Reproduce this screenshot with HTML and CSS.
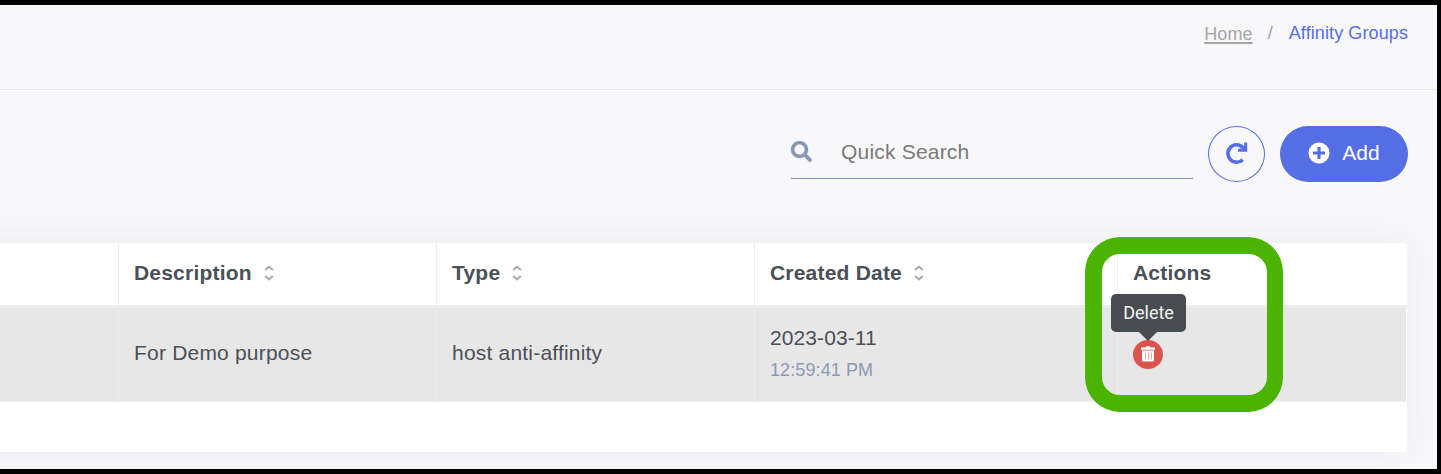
FILE: index.html
```html
<!DOCTYPE html>
<html lang="en">
<head>
<meta charset="utf-8">
<title>Affinity Groups</title>
<link rel="stylesheet" href="styles.css">
</head>
<body>
<svg class="sprite" aria-hidden="true">
  <symbol id="sort" viewBox="0 0 10 16"><path d="M1.200 5 5 1.500 8.800 5M1.200 11 5 14.500 8.800 11" fill="none" stroke="#aaa" stroke-width="2"/></symbol>
</svg>
<main class="page">
  <nav class="breadcrumb">
    <a class="home">Home</a><span class="slash">/</span><span class="current">Affinity Groups</span>
  </nav>
  <section class="toolbar">
    <label class="search">
      <svg class="search-icon" viewBox="0 0 512 512"><path fill="currentColor" stroke="currentColor" stroke-width="8" d="M505 442.700 405.300 343c-4.500-4.500-10.600-7-17-7H372c27.600-35.300 44-79.700 44-128C416 93.100 322.900 0 208 0S0 93.100 0 208s93.100 208 208 208c48.300 0 92.700-16.400 128-44v16.300c0 6.400 2.500 12.500 7 17l99.700 99.700c9.400 9.400 24.600 9.400 33.900 0l28.300-28.300c9.400-9.400 9.400-24.600.1-34zM208 336c-70.700 0-128-57.200-128-128 0-70.700 57.200-128 128-128 70.700 0 128 57.200 128 128 0 70.700-57.200 128-128 128z"/></svg>
      <span class="placeholder">Quick Search</span>
    </label>
    <button class="refresh" aria-label="Refresh">
      <svg viewBox="0 0 22 22" width="22" height="22"><path d="M18.600 8A8.700 8.700 0 1 0 16.700 17.700" fill="none" stroke="currentColor" stroke-width="3.600"/><path d="M18.100 .6h3.100v9.200H12V6.700h3.300l2.800-2.700z" fill="currentColor"/></svg>
    </button>
    <button class="add">
      <svg viewBox="0 0 22 22" width="22" height="22"><circle cx="11" cy="11" r="10.500" fill="#fff"/><path d="M11 5v12M5 11h12" stroke="#556ee6" stroke-width="3.200"/></svg>
      <span>Add</span>
    </button>
  </section>
  <section class="card">
    <div class="row head">
      <div class="cell"></div>
      <div class="cell">Description<svg class="sort"><use href="#sort"/></svg></div>
      <div class="cell">Type<svg class="sort"><use href="#sort"/></svg></div>
      <div class="cell">Created Date<svg class="sort"><use href="#sort"/></svg></div>
      <div class="cell">Actions</div>
    </div>
    <div class="row body">
      <div class="cell"></div>
      <div class="cell">For Demo purpose</div>
      <div class="cell">host anti-affinity</div>
      <div class="cell date"><span>2023-03-11</span><span class="time">12:59:41 PM</span></div>
      <div class="cell">
        <div class="delete">
          <svg viewBox="0 0 14 16" width="14" height="16"><path fill="#fff" d="M0 1.500h4.500L5.200.3h3.600l.7 1.200H14v2.300H0zM1 4.500h12v9.800q0 1.200-1.200 1.200H2.200Q1 15.500 1 14.300z"/><path d="M4.500 6.500v7M7.500 6.500v7M10.500 6.500v7" stroke="#eaa59c" stroke-width="1"/></svg>
          <div class="tooltip">Delete</div>
        </div>
      </div>
    </div>
    <div class="highlight"></div>
  </section>
</main>
</body>
</html>
```
FILE: styles.css
```css
* { box-sizing: border-box; }
body {
  margin: 0;
  background: #000;
  font: 21px/24px "Liberation Sans", Arial, sans-serif;
  letter-spacing: .2px;
  color: #495057;
}
.sprite { position: absolute; width: 0; height: 0; }
.page {
  height: 474px;
  border: solid #000;
  border-width: 5px 4px 5px 0;
  background: #f8f8fb;
  overflow: hidden;
}
.breadcrumb {
  display: flex;
  justify-content: flex-end;
  height: 85px;
  padding: 17px 29px 0 0;
  border-bottom: 1px solid #e9e9ec;
  font-size: 18px;
  line-height: 22px;
  letter-spacing: .1px;
}
.home {
  height: 22px;
  margin-top: 1px;
  color: #a6a6a6;
  text-decoration: underline;
  text-decoration-thickness: 2px;
  text-underline-offset: 2px;
}
.slash { margin: 0 16px 0 15px; color: #a0a0a4; }
.current { color: #556ee6; }
.toolbar {
  display: flex;
  justify-content: flex-end;
  gap: 15px;
  height: 153px;
  padding: 36px 29px 0 0;
}
.search {
  display: flex;
  width: 402px;
  height: 53px;
  padding-top: 14px;
  border-bottom: 1px solid #8295b0;
}
.search-icon { width: 21px; height: 21px; margin-top: .5px; color: #8498b2; overflow: visible; }
.placeholder { margin-left: 29px; color: #797979; }
button {
  display: flex;
  align-items: center;
  justify-content: center;
  height: 56px;
  padding: 0;
  font: inherit;
  letter-spacing: 0;
}
.refresh {
  width: 57px;
  border: 1px solid #556ee6;
  border-radius: 50%;
  background: transparent;
  color: #556ee6;
}
.refresh svg { margin-top: -3px; }
.add {
  width: 128px;
  gap: 12px;
  border: 0;
  border-radius: 28px;
  background: #556ee6;
  color: #fff;
}
.add svg, .add span { margin-top: -2px; }
.card {
  position: relative;
  width: 1507px;
  height: 209px;
  margin-left: -100px;
  padding-left: 100px;
  border-radius: 4px;
  background: #fff;
  box-shadow: 0 0 35px rgba(18, 38, 63, .055);
}
.row { display: grid; grid-template-columns: 118px 318px 318px 363px 1fr; }
.cell {
  display: flex;
  align-items: center;
  padding-left: 15px;
  border-left: 1px solid #eee;
}
.cell:first-child { border-left: 0; }
.head {
  height: 65px;
  border-bottom: 3px solid #ededed;
  font-weight: 700;
  letter-spacing: .2px;
}
.head .cell { padding-bottom: 2px; }
.sort { width: 10px; height: 16px; margin-left: 12px; }
.body {
  height: 94px;
  margin-right: 1px;
  border-bottom: 1px solid #eee;
  background: #e7e7e7;
}
.body .cell { padding-bottom: 4px; }
.body .date {
  flex-direction: column;
  align-items: flex-start;
  justify-content: center;
  gap: 8px;
  padding-bottom: 2px;
  letter-spacing: .1px;
}
.time { color: #8b9bb2; font-size: 18px; letter-spacing: .1px; }
.delete {
  position: relative;
  display: flex;
  align-items: center;
  justify-content: center;
  width: 30px;
  height: 29px;
  margin-top: 3px;
  border-radius: 50%;
  background: #da544d;
}
/* Tooltip sits over the header row, its arrow touching the button */
.tooltip {
  position: absolute;
  left: -22px;
  bottom: 37px;
  z-index: 2;
  width: 75px;
  height: 38px;
  border-radius: 5px;
  background: #484c51;
  color: #f3f3f3;
  font: 18px/38px Roboto, sans-serif;
  letter-spacing: 0;
  text-align: center;
}
.tooltip::after {
  content: "";
  position: absolute;
  top: 100%;
  left: 28px;
  border: solid transparent;
  border-width: 9px 9px 0;
  border-top-color: #484c51;
}
.highlight {
  position: absolute;
  top: -6px;
  left: 1185px;
  width: 198px;
  height: 175px;
  border: 17px solid #4ab400;
  border-right-width: 16px;
  border-radius: 35px;
}
```
